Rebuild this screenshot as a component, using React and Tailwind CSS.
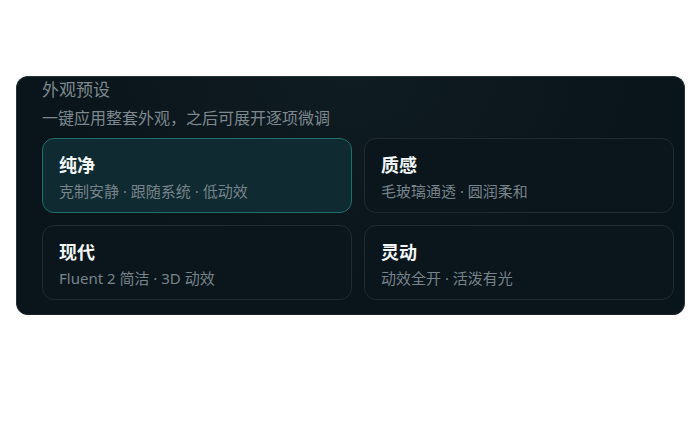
import React from "react";

const presets = [
  { name: "纯净", desc: "克制安静 · 跟随系统 · 低动效", active: true },
  { name: "质感", desc: "毛玻璃通透 · 圆润柔和" },
  { name: "现代", desc: "Fluent 2 简洁 · 3D 动效" },
  { name: "灵动", desc: "动效全开 · 活泼有光" },
];

function PresetCard({ preset }) {
  return (
    <div
      className={
        preset.active
          ? "rounded-[12px] border border-[#1f6f6c] bg-[#0f2a30] pl-[16px] pr-3 pt-[14px] pb-[10px]"
          : "rounded-[12px] border border-[#1e2b32] bg-[#0b161c] pl-[16px] pr-3 pt-[14px] pb-[10px]"
      }
    >
      <p className="text-[18px] leading-[25px] font-bold text-[#f2f6f7]">
        {preset.name}
      </p>
      <p className="mt-[2px] text-[15px] leading-[22px] text-[#77838a]">
        {preset.desc}
      </p>
    </div>
  );
}

export default function App() {
  return (
    <div
      className="w-[700px] h-[440px] bg-white pt-[76px] pl-[16px]"
      style={{ fontFamily: '"Noto Sans", "Noto Sans CJK SC", sans-serif' }}
    >
      <div className="w-[669px] rounded-[12px] border border-[#26343a] border-b-[#1a252b] bg-[#0a151b] bg-[radial-gradient(ellipse_at_top,_#0f1c22_0%,_#0a151b_60%)] pl-[25px] pr-[10px] pt-[1px] pb-[14px]">
        {/* Header */}
        <p className="text-[17px] leading-[24px] text-[#7d888e]">外观预设</p>
        <p className="mt-[4px] text-[16px] leading-[24px] text-[#7d888e]">
          一键应用整套外观，之后可展开逐项微调
        </p>
        {/* Presets */}
        <div className="mt-[8px] grid grid-cols-2 gap-[12px]">
          {presets.map((p) => (
            <PresetCard key={p.name} preset={p} />
          ))}
        </div>
      </div>
    </div>
  );
}
